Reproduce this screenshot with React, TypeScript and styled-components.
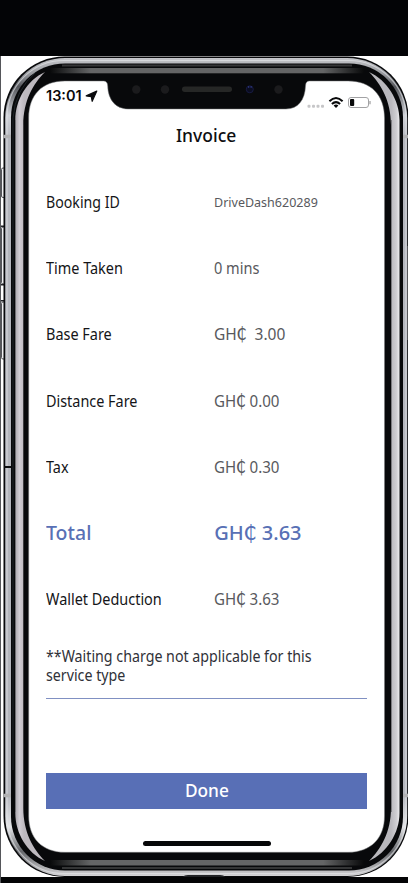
import React from "react";
import styled, { createGlobalStyle } from "styled-components";

const GlobalStyle = createGlobalStyle`
  * { box-sizing: border-box; }
  body { margin: 0; background: #020304; font-family: "Noto Sans", sans-serif; }
`;

const Stage = styled.div`
  position: relative;
  width: 408px;
  height: 883px;
  overflow: hidden;
`;

const Phone = styled.svg`
  position: absolute;
  inset: 0;
`;

const Screen = styled.main`
  position: relative;
  display: flex;
  flex-direction: column;
  height: 883px;
  padding: 81px 41px 0 46px;
`;

const StatusBar = styled.div`
  display: flex;
  justify-content: space-between;
  height: 36px;
  margin-right: -4px;
`;

const Clock = styled.div`
  display: flex;
  align-items: center;
  gap: 3px;
  height: 20px;
  margin-top: 5px;
  font: 600 14.5px/20px Inter, sans-serif;
  color: #0a0b0d;
`;

const Indicators = styled.div`
  display: flex;
  padding-top: 14px;
`;

/* Narrows the text horizontally, keeping its height. */
const Fit = styled.span<{ $x: number; $center?: boolean }>`
  display: inline-block;
  white-space: pre;
  transform: scaleX(${(p) => p.$x});
  transform-origin: ${(p) => (p.$center ? "50%" : "0")} 50%;
`;

const Title = styled.h1`
  margin: 4px 0 0;
  height: 28px;
  padding-right: 1px;
  text-align: center;
  font-size: 18px;
  line-height: 28px;
  font-weight: 500;
  color: #0d0e10;
`;

const Rows = styled.dl`
  margin: 19.8px 0 0;
  display: grid;
  grid-auto-rows: 66.25px;
`;

const Row = styled.div<{ $total?: boolean }>`
  display: grid;
  grid-template-columns: 168.3px 1fr;
  align-items: center;
  font-size: ${(p) => (p.$total ? 20 : 16)}px;
  font-weight: ${(p) => (p.$total ? 500 : 400)};
  line-height: 22px;
  color: ${(p) => (p.$total ? "#5870b5" : "#141518")};
`;

const Label = styled.dt``;

const Value = styled.dd<{ $total?: boolean; $size?: number }>`
  margin: 0;
  color: ${(p) => (p.$total ? "inherit" : "#58595d")};
  font-size: ${(p) => (p.$size ? `${p.$size}px` : "inherit")};
`;

const Cedi = styled.span`
  font-family: "DejaVu Sans", sans-serif;
  font-weight: 400;
  font-size: 1.08em;
  line-height: 0;
  margin: 0 -0.5px;
`;

const Note = styled.p`
  margin: 14.2px 0 0;
  height: 52px;
  border-bottom: 1.5px solid #8090c2;
  font-size: 16px;
  line-height: 19px;
  color: #303138;
`;

const DoneButton = styled.button`
  margin: 74px 0 0;
  height: 36px;
  border: 0;
  padding: 0;
  background: #586fb6;
  color: #fff;
  font: 500 18px/35px "Noto Sans", sans-serif;
`;

const HomeBar = styled.div`
  width: 128px;
  height: 5px;
  margin: 32px 0 0 97px;
  border-radius: 3px;
  background: #060708;
`;

type Item = {
  label: string;
  lx: number;
  value: string;
  vx: number;
  size?: number;
  total?: boolean;
};

const items: Item[] = [
  { label: "Booking ID", lx: 0.885, value: "DriveDash620289", vx: 0.963, size: 13 },
  { label: "Time Taken", lx: 0.902, value: "0 mins", vx: 0.91 },
  { label: "Base Fare", lx: 0.903, value: "GH₵  3.00", vx: 0.97 },
  { label: "Distance Fare", lx: 0.9, value: "GH₵ 0.00", vx: 0.943 },
  { label: "Tax", lx: 0.9, value: "GH₵ 0.30", vx: 0.943 },
  { label: "Total", lx: 0.975, value: "GH₵ 3.63", vx: 1, total: true },
  { label: "Wallet Deduction", lx: 0.902, value: "GH₵ 3.63", vx: 0.943 },
];

const Amount = ({ text }: { text: string }) => {
  const [before, after] = text.split("₵");
  if (after === undefined) return <>{text}</>;
  return (
    <>
      {before}
      <Cedi>₵</Cedi>
      {after}
    </>
  );
};

const PhoneBody = () => (
  <Phone width="408" height="883" viewBox="0 0 408 883">
    <defs>
      <linearGradient id="shine" x1="0" x2="1">
        <stop offset="0" stopColor="#08090a" />
        <stop offset=".13" stopColor="#646566" />
        <stop offset=".87" stopColor="#646566" />
        <stop offset="1" stopColor="#08090a" />
      </linearGradient>
      <linearGradient id="side" gradientUnits="userSpaceOnUse" x1="15" x2="24" y1="0" y2="0">
        <stop offset="0" stopColor="#aaa7ad" />
        <stop offset=".5" stopColor="#d0ccd3" />
        <stop offset="1" stopColor="#bdb9bf" />
      </linearGradient>
      <linearGradient id="sideR" gradientUnits="userSpaceOnUse" x1="391" x2="400" y1="0" y2="0">
        <stop offset="0" stopColor="#b9b8bd" />
        <stop offset=".6" stopColor="#cfced2" />
        <stop offset="1" stopColor="#f2f2f4" />
      </linearGradient>
      <linearGradient id="rim" x1="0" y1="0" x2="0" y2="1">
        <stop offset="0" stopColor="#c6c7cb" />
        <stop offset=".02" stopColor="#96989d" />
        <stop offset=".035" stopColor="#55575c" />
        <stop offset=".07" stopColor="#d0d2d8" />
        <stop offset=".1" stopColor="#b4b6bd" />
        <stop offset=".9" stopColor="#b4b6bd" />
        <stop offset=".94" stopColor="#e4e5e8" />
        <stop offset=".97" stopColor="#66686c" />
        <stop offset="1" stopColor="#d4d4d6" />
      </linearGradient>
    </defs>
    <rect width="408" height="56" fill="#030406" />
    <rect y="56" width="408" height="821" fill="#fff" />
    <rect y="56" width="1" height="827" fill="#55565a" />
    {/* side buttons */}
    <g fill="#f1f1f3" stroke="#54555a" strokeWidth="1">
      <rect x="1.5" y="168" width="5" height="29.5" rx="1.5" />
      <rect x="1.5" y="227" width="5" height="57" rx="1.5" />
      <rect x="1.5" y="302" width="5" height="57" rx="1.5" />
    </g>
    <g fill="#222327">
      <rect x="1" y="225.500" width="3" height="1.500" />
      <rect x="1" y="284" width="3" height="1.500" />
      <rect x="1" y="300" width="3" height="1.500" />
    </g>
    {/* chassis rings */}
    <rect x="3.500" y="56.500" width="405" height="820.500" rx="61" fill="#08090b" />
    <rect x="5.200" y="58" width="402" height="818" rx="60" fill="url(#rim)" />
    <rect x="7" y="60.500" width="399" height="813" rx="57" fill="none" stroke="#e6e7eb" strokeWidth="1.200" opacity=".6" />
    <rect x="11" y="63.500" width="392" height="807" rx="54" fill="#08090b" />
    <path d="M62 64.500H352V66.500H62ZM62 867H352V869H62Z" fill="#343536" />
    <path d="M13 770V118Q15 90 36 72" fill="none" stroke="#20262a" strokeWidth="1" />
    <rect x="50" y="68" width="314" height="5.300" fill="url(#shine)" />
    <rect x="50" y="860" width="314" height="5.500" fill="url(#shine)" />
    <path
      d="M15.300 120C15.300 100 27 80 45 72C33 84 23.300 101 23.300 125V808C23.300 832 33 849 45 861C27 853 15.300 833 15.300 813Z"
      fill="url(#side)"
    />
    <path
      d="M391 125C391 101 381 84 369 72C387 80 399.500 100 399.500 120V813C399.500 833 387 853 369 861C381 849 391 832 391 808Z"
      fill="url(#sideR)"
    />
    <path d="M15.500 120V812M391.500 120V812" stroke="#6c6c70" strokeWidth=".8" />
    {/* antenna bands and seams */}
    <path d="M3.500 136.500H11M403 136.500H408M3.500 795.500H11M403 795.500H408" stroke="#b1b1b3" strokeWidth="3.500" />
    <path d="M4 467H11" stroke="#0c0d0f" strokeWidth="2" />
    <rect x="407" y="246" width="1" height="94" fill="#56575b" />
    {/* display */}
    <path
      d="M65 81H103.500Q107.500 81 107.700 86C108 100 116 109 128 109H286C298 109 305 100 305.500 86Q305.700 81 309.500 81H348C371 81 384.500 95 384.500 118V816C384.500 838 371 852.300 348 852.300H65C42 852.300 28.700 838 28.700 816V118C28.700 95 42 81 65 81Z"
      fill="#fff"
      stroke="#77787a"
      strokeWidth=".5"
    />
    {/* notch sensors */}
    <g fill="#1b1b1d">
      <circle cx="136.300" cy="89.500" r="4.200" />
      <circle cx="165" cy="89.500" r="4.200" />
      <circle cx="278.500" cy="89.500" r="4.200" />
    </g>
    <rect x="182" y="86.500" width="50" height="5.500" rx="2.700" fill="#262726" />
    <circle cx="249.800" cy="89.300" r="3.500" fill="#0a0c20" stroke="#171b42" />
    <path d="M248 87h1.300M250.500 87h1.300" stroke="#3f4cb0" />
    {/* bottom edge */}
    <rect x="1" y="877" width="407" height="6" fill="#030405" />
    <path d="M183 877Q184 875 188 875H220Q224 875 225 877Z" fill="#202225" />
  </Phone>
);

const LocationArrow = () => (
  <svg width="13" height="13" viewBox="0 0 13 13">
    <path
      d="M11.800 1L7.200 11.300L6.300 6.700L1.200 5.900Z"
      fill="#0a0b0d"
      stroke="#0a0b0d"
      strokeWidth="1.200"
      strokeLinejoin="round"
    />
  </svg>
);

const StatusIcons = () => (
  <svg width="64" height="15" viewBox="307 95 64 15">
    <g fill="#c6c6c8">
      <rect x="307.500" y="104.700" width="3" height="3" rx="1" />
      <rect x="312" y="104.700" width="3" height="3" rx="1" />
      <rect x="316.500" y="104.700" width="3" height="3" rx="1" />
      <rect x="321" y="104.700" width="3" height="3" rx="1" />
    </g>
    <g fill="none" stroke="#08090a" strokeWidth="2">
      <path d="M329.400 101.200Q336 94.800 342.600 101.200" />
      <path d="M331.900 104Q336 100.200 340.100 104" />
    </g>
    <path d="M333.600 105.500Q336 103.500 338.400 105.500L336 108Z" fill="#08090a" />
    <rect x="348.500" y="97.500" width="20" height="10" rx="2.500" fill="none" stroke="#a2a2a4" />
    <path d="M370 101v3.200" stroke="#a2a2a4" strokeWidth="1.300" />
    <rect x="350" y="99" width="4.200" height="7" rx="1" fill="#08090a" />
  </svg>
);

export default function App() {
  return (
    <>
      <GlobalStyle />
      <Stage>
        <PhoneBody />
        <Screen>
          <StatusBar>
            <Clock>
              <span>13:01</span>
              <LocationArrow />
            </Clock>
            <Indicators>
              <StatusIcons />
            </Indicators>
          </StatusBar>
          <Title>
            <Fit $x={0.97} $center>Invoice</Fit>
          </Title>
          <Rows>
            {items.map((it) => (
              <Row key={it.label} $total={it.total}>
                <Label>
                  <Fit $x={it.lx}>{it.label}</Fit>
                </Label>
                <Value $total={it.total} $size={it.size}>
                  <Fit $x={it.vx}>
                    <Amount text={it.value} />
                  </Fit>
                </Value>
              </Row>
            ))}
          </Rows>
          <Note>
            <Fit $x={0.889}>{"**Waiting charge not applicable for this\nservice type"}</Fit>
          </Note>
          <DoneButton>
            <Fit $x={0.96} $center>Done</Fit>
          </DoneButton>
          <HomeBar />
        </Screen>
      </Stage>
    </>
  );
}
